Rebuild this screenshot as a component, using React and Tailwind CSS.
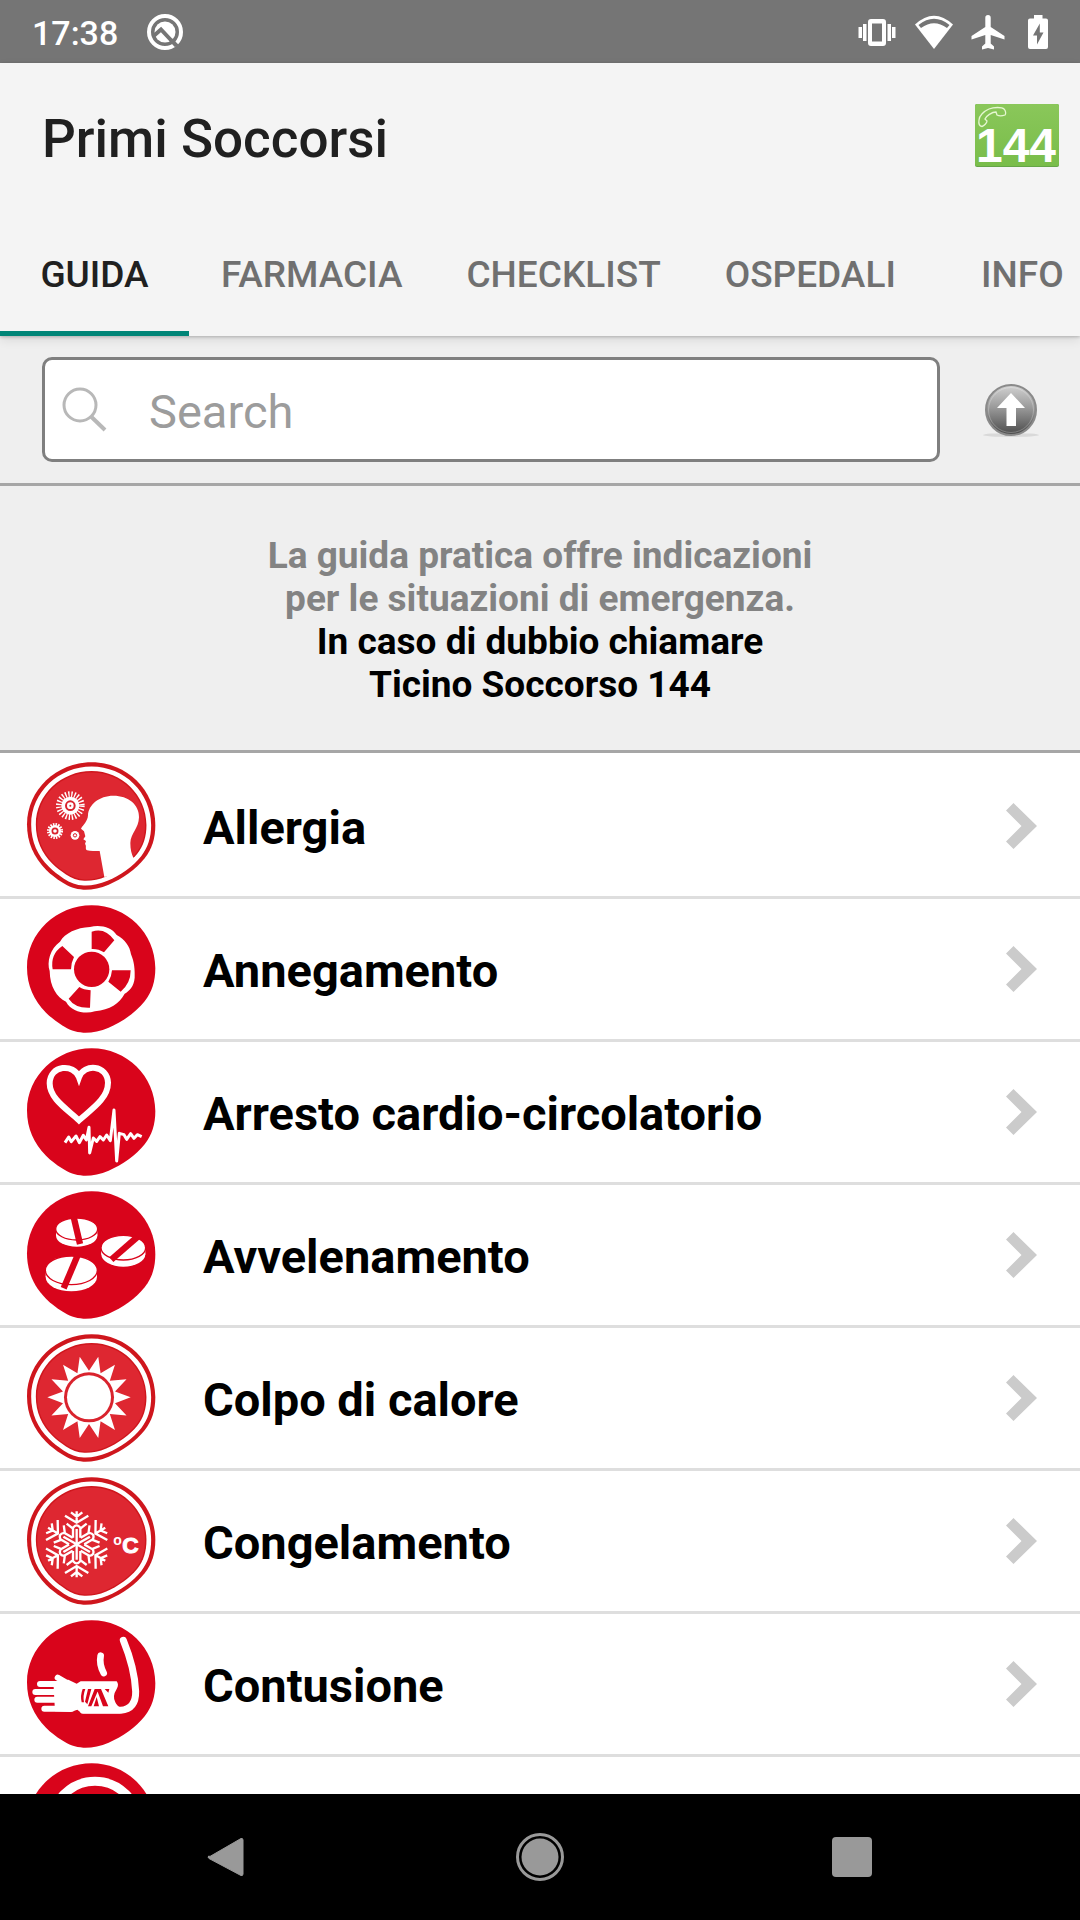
import React from "react";

const BLOB =
  "M197 4C302 4 388 88 388 192C388 232 378 264 356 292C330 325 288 354 248 371C222 382 196 387 172 386C148 385 128 377 108 364C90 352 74 340 60 326C24 290 3 245 3 190C3 86 92 4 197 4Z";

/* Red pebble-shaped badge; "ringed" adds the white inner outline. */
function Badge({ top, ringed, children }) {
  return (
    <svg viewBox={`78 ${top - 4} 390 390`} className="h-[130px] w-[130px] shrink-0" aria-hidden="true">
      <g transform={`translate(78 ${top - 4})`}>
        <path d={BLOB} fill={ringed ? "#cf161d" : "#d9041b"} />
        {ringed && (
          <>
            <path d={BLOB} fill="#fff" transform="translate(195 194) scale(.935) translate(-195 -194)" />
            <path d={BLOB} fill="#cf161d" transform="translate(195 194) scale(.862) translate(-195 -194)" />
            <path d={BLOB} fill="#de2731" transform="translate(195 194) scale(.84) translate(-195 -194)" />
          </>
        )}
      </g>
      {children}
    </svg>
  );
}

function AllergyIcon() {
  return (
    <Badge top={63} ringed>
      <path
        fill="#fff"
        d="M340 163C385 163 418 190 417 228C416 262 392 276 391 305C391 325 395 338 400 349L424 338L390 374L350 400L313 407L299 329C285 328 272 330 261 327C254 323 261 314 255 308L258 299L250 294L256 285L252 270L243 262C250 250 263 240 264 222C265 190 298 163 340 163Z"
      />
      <circle cx="211" cy="193" r="34" fill="none" stroke="#fff" strokeWidth="18" strokeDasharray="4 5" />
      <circle cx="211" cy="193" r="27" fill="#fff" />
      <circle cx="211" cy="193" r="13" fill="none" stroke="#d9232d" strokeWidth="6" />
      <circle cx="211" cy="193" r="3" fill="#d9232d" />
      <circle cx="165" cy="269" r="18" fill="none" stroke="#fff" strokeWidth="12" strokeDasharray="4 3" />
      <circle cx="165" cy="269" r="18" fill="#fff" />
      <circle cx="165" cy="269" r="8" fill="none" stroke="#d9232d" strokeWidth="5" />
      <circle cx="225" cy="282" r="13" fill="#fff" />
      <circle cx="225" cy="282" r="5" fill="none" stroke="#d9232d" strokeWidth="3" />
    </Badge>
  );
}

function DrowningIcon() {
  return (
    <Badge top={495}>
      <path
        fill="#fff"
        d="M270 560C300 552 335 560 350 584C375 598 390 618 393 642C403 665 405 690 404 712C402 738 388 752 374 760C358 790 330 808 285 813C255 822 215 815 198 784C170 770 150 740 149 692C140 665 150 625 180 604C195 578 230 562 270 560Z"
      />
      <path
        fill="#d9041b"
        d="M275 574Q315 560 343 600L312 636Q295 625 275 626ZM187 617L222 650Q214 665 213 687L158 687Q150 642 187 617ZM336 690L392 690Q392 730 362 754L325 724Q335 708 336 690ZM238 740L206 775Q225 804 270 802L272 750Q250 748 238 740Z"
      />
      <circle cx="275" cy="687" r="53" fill="#d9041b" />
    </Badge>
  );
}

function HeartIcon() {
  return (
    <Badge top={55}>
      <path
        fill="none"
        stroke="#fff"
        strokeWidth="18"
        d="M237 142C222 100 150 104 149 160C149 206 202 238 237 271C274 238 324 206 324 158C322 104 252 100 237 142Z"
      />
      <path
        fill="none"
        stroke="#fff"
        strokeWidth="9"
        strokeLinejoin="round"
        d="M195 338L206 321L214 335L228 318L238 338L250 316L259 330L267 292L269 369L280 324L290 334L300 320L310 330L320 315L331 332L342 240L350 393L358 310L372 314L380 328L392 311L402 325L412 314L425 320"
      />
    </Badge>
  );
}

function Pill({ cx, cy, rx, ry, slot }) {
  return (
    <>
      <ellipse cx={cx} cy={cy + 20} rx={rx} ry={ry} fill="#fff" />
      <rect x={cx - rx} y={cy} width={rx * 2} height="20" fill="#fff" />
      <ellipse cx={cx} cy={cy} rx={rx + 1} ry={ry} fill="#fff" stroke="#d9041b" strokeWidth="4" />
      <path d={slot} stroke="#d9041b" strokeWidth="19" />
    </>
  );
}

function PoisonIcon() {
  return (
    <Badge top={483}>
      <Pill cx={230} cy={596} rx={62} ry={33} slot="M221 560L240 641" />
      <Pill cx={370} cy={652} rx={66} ry={37} slot="M412 620L334 688" />
      <Pill cx={214} cy={720} rx={77} ry={43} slot="M233 675L191 774" />
    </Badge>
  );
}

const SUN_RAYS = Array.from({ length: 28 }, (_, i) => {
  const r = i % 2 ? 80 : 125;
  const a = (i * Math.PI) / 14;
  return `${(267 + r * Math.cos(a)).toFixed(1)},${(229 + r * Math.sin(a)).toFixed(1)}`;
}).join(" ");

function SunIcon() {
  return (
    <Badge top={40} ringed>
      <polygon points={SUN_RAYS} fill="#fff" />
      <circle cx="267" cy="229" r="75" fill="#d9232d" />
      <circle cx="267" cy="229" r="66" fill="#fff" />
    </Badge>
  );
}

function FrostIcon() {
  return (
    <Badge top={469} ringed>
      <g transform="translate(230 670)" fill="none" stroke="#fff" strokeWidth="7">
        {[0, 60, 120, 180, 240, 300].map((a) => (
          <path
            key={a}
            transform={`rotate(${a})`}
            d="M0 0V-46M0 -66V-99M-17 -96L0 -83L17 -96M-35 -86L0 -65L35 -86M-11 -20V-50Q0 -64 11 -50V-20M-12 -48L-30 -62M12 -48L30 -62"
          />
        ))}
      </g>
      <text x="340" y="673" fill="#fff" fontSize="42" fontWeight="700" fontFamily="Liberation Sans, sans-serif">o</text>
      <text x="367" y="696" fill="#fff" stroke="#fff" strokeWidth="3" fontSize="68" fontWeight="700" fontFamily="Liberation Sans, sans-serif">C</text>
    </Badge>
  );
}

function BruiseIcon() {
  return (
    <Badge top={62}>
      <g fill="none" stroke="#fff" strokeLinecap="round" strokeLinejoin="round">
        <path strokeWidth="21" d="M370 122Q404 205 407 275Q408 328 362 332L250 332" />
        <path strokeWidth="20" d="M302 168Q297 194 311 220" />
        <path strokeWidth="18" d="M120 253H190M106 277H190M112 300H190M133 327H215M173 234L232 268" />
      </g>
      <path fill="#fff" d="M160 245L205 240L230 252L242 245L350 245Q358 255 350 268Q336 290 346 308Q352 322 366 325L360 341L245 341L232 330L212 337L165 335Z" />
      <g fill="#d9041b">
        <path d="M248 268H256Q248 288 252 308H245Q240 288 248 268ZM264 268H274L262 314L255 306ZM284 268H296L274 320H264ZM290 292L297 320H281ZM290 268H303L325 320H309ZM314 268H328L325 279Z" />
      </g>
    </Badge>
  );
}

function RingIcon() {
  return (
    <Badge top={489}>
      <circle cx="285" cy="673" r="130" fill="none" stroke="#fff" strokeWidth="27" />
    </Badge>
  );
}

const TABS = ["GUIDA", "FARMACIA", "CHECKLIST", "OSPEDALI", "INFO"];

const TOPICS = [
  { label: "Allergia", Icon: AllergyIcon },
  { label: "Annegamento", Icon: DrowningIcon },
  { label: "Arresto cardio-circolatorio", Icon: HeartIcon },
  { label: "Avvelenamento", Icon: PoisonIcon },
  { label: "Colpo di calore", Icon: SunIcon },
  { label: "Congelamento", Icon: FrostIcon },
  { label: "Contusione", Icon: BruiseIcon },
  { label: "", Icon: RingIcon },
];

function StatusBar() {
  return (
    <div className="flex h-[63px] shrink-0 items-center bg-[#757575] px-8 text-white">
      <span className="pt-0.5 text-[34px] font-medium leading-none">17:38</span>
      <svg viewBox="0 0 38 38" className="ml-7 h-[38px] w-[38px]" aria-hidden="true">
        <circle cx="19" cy="19" r="16" fill="none" stroke="#fff" strokeWidth="4" />
        <circle cx="19" cy="19" r="10.500" fill="#fff" />
        <path d="M7 23.500L15 16.500L30.500 33" fill="none" stroke="#757575" strokeWidth="4" />
        <path d="M25.500 26.500L34 35.500" stroke="#757575" strokeWidth="3" />
      </svg>
      <div className="ml-auto flex items-center gap-[17px]">
        <svg viewBox="0 0 40 36" className="h-9 w-10" fill="#fff" aria-hidden="true">
          <path fillRule="evenodd" d="M14 5h12a3 3 0 0 1 3 3v21a3 3 0 0 1-3 3H14a3 3 0 0 1-3-3V8a3 3 0 0 1 3-3zm1 4.500v18h10v-18z" />
          <path d="M6 10h3.500v17H6zM1.500 13H5v11H1.500zM30.500 10H34v17h-3.500zM35 13h3.500v11H35z" />
        </svg>
        <svg viewBox="0 0 40 36" className="h-9 w-10" aria-hidden="true">
          <path d="M1 10.500Q20-7 39 10.500L20 35Z" fill="#fff" />
          <path d="M4.500 11Q20-1.500 35.500 11L33 14Q20 4.500 7 14Z" fill="#757575" />
        </svg>
        <svg viewBox="0 0 34 36" className="h-9 w-[34px]" aria-hidden="true">
          <path d="M17 1a2.700 2.700 0 0 1 2.700 2.700V13L33.500 22v3.500L19.700 21v8.500L23 32.500V35.500L17 34L11 35.500V32.500L14.300 29.500V21L.5 25.500V22L14.300 13V3.700A2.700 2.700 0 0 1 17 1Z" fill="#fff" />
        </svg>
        <svg viewBox="-6 0 26 36" className="h-9 w-[26px]" aria-hidden="true">
          <path d="M6 1h8.500v3.500H18a2 2 0 0 1 2 2V33a2 2 0 0 1-2 2H2a2 2 0 0 1-2-2V6.500a2 2 0 0 1 2-2h4z" fill="#fff" />
          <path d="M11.800 9.500L5 21.500H9V30.500L15.500 18.500H11.800Z" fill="#757575" />
        </svg>
      </div>
    </div>
  );
}

function Header() {
  return (
    <header className="relative z-10 shrink-0 bg-[#f4f4f4] shadow-[0_1px_3px_rgba(0,0,0,0.22),0_4px_10px_rgba(0,0,0,0.09)]">
      <div className="flex h-[147px] items-center justify-between pb-0.5 pl-[42px] pr-[21px]">
        <h1 className="pt-2 text-[53px] font-medium leading-none text-[#202020]">Primi Soccorsi</h1>
        <button type="button" aria-label="Chiama 144">
          <svg viewBox="0 0 84 63" className="h-[63px] w-[84px] overflow-visible" aria-hidden="true">
            <defs>
              <linearGradient id="call-green" x1="0" y1="0" x2="0" y2="1">
                <stop offset="0" stopColor="#8ac75a" />
                <stop offset="1" stopColor="#79bd4a" />
              </linearGradient>
            </defs>
            <rect width="84" height="63" rx="2" fill="#66a548" />
            <rect width="84" height="62" rx="2" fill="url(#call-green)" />
            <path
              d="M4 16C4 12 9 7 14 5C19 3 27 3 29 5C31 7 31 10 30 11C27 12 24 12 22 11L21 8C17 8 11 12 10 15L12 17C12 19 9 22 7 22.500C4 22 3.500 19 4 16Z"
              fill="none"
              stroke="#e6f7d2"
              strokeWidth="1.300"
            />
            <text x="41" y="58" textAnchor="middle" fill="#fff" fontSize="48" fontWeight="700" fontFamily="Liberation Sans, sans-serif">144</text>
          </svg>
        </button>
      </div>
      <nav className="flex h-[126px] overflow-hidden" role="tablist">
        {TABS.map((tab, i) => (
          <button
            key={tab}
            type="button"
            role="tab"
            aria-selected={i === 0}
            className={
              "flex min-w-[189px] shrink-0 items-center justify-center border-y-[5px] border-t-transparent px-8 pt-0.5 text-[37px] font-medium leading-none " +
              (i === 0 ? "border-b-[#008577] text-[#202020]" : "border-b-transparent text-[#707070]")
            }
          >
            {tab}
          </button>
        ))}
      </nav>
    </header>
  );
}

function SearchBar() {
  return (
    <div className="flex shrink-0 items-center border-b-[3px] border-[#a6a6a6] py-[21px] pl-[42px] pr-[41px]">
      <label className="flex h-[105px] flex-1 items-center rounded-[10px] border-[3px] border-[#7f7f7f] bg-white pl-[17px]">
        <svg viewBox="0 0 46 46" className="h-[46px] w-[46px] shrink-0" fill="none" stroke="#b8b8b8" aria-hidden="true">
          <circle cx="18" cy="18" r="16" strokeWidth="3" />
          <path d="M29.500 30L43 43" strokeWidth="4" />
        </svg>
        <input
          type="text"
          aria-label="Search"
          placeholder="Search"
          className="ml-[41px] h-full min-w-0 flex-1 bg-transparent pt-1 text-[47px] text-black outline-none placeholder:text-[#9c9c9c]"
        />
      </label>
      <button type="button" aria-label="Torna su" className="ml-[43px]">
        <svg viewBox="0 0 56 56" className="h-14 w-14" aria-hidden="true">
          <defs>
            <linearGradient id="up-grey" x1="0" y1="0" x2="0" y2="1">
              <stop offset="0" stopColor="#d2d2d2" />
              <stop offset=".45" stopColor="#9a9a9a" />
              <stop offset="1" stopColor="#4a4a4a" />
            </linearGradient>
          </defs>
          <ellipse cx="28" cy="53" rx="28" ry="2" fill="#d9d9d9" />
          <circle cx="28" cy="28" r="25" fill="url(#up-grey)" stroke="#8a8a8a" strokeWidth="2" />
          <circle cx="28" cy="28" r="22.500" fill="none" stroke="#fff" strokeOpacity=".25" />
          <path d="M28 11L42 26H33V44H23.500V26H14Z" fill="#fff" />
        </svg>
      </button>
    </div>
  );
}

export default function App() {
  return (
    <div className="flex h-screen flex-col overflow-hidden bg-white font-[Roboto,sans-serif]">
      <StatusBar />
      <Header />
      <main className="flex min-h-0 flex-1 flex-col overflow-hidden">
        <div className="shrink-0 bg-[#efefef]">
          <SearchBar />
          <p className="border-b-[3px] border-[#a6a6a6] pb-11 pt-12 text-center text-[37px] font-bold leading-[43px] text-black">
            <span className="text-[#838383]">
              La guida pratica offre indicazioni
              <br />
              per le situazioni di emergenza.
            </span>
            <br />
            In caso di dubbio chiamare
            <br />
            Ticino Soccorso 144
          </p>
        </div>
        <ul className="pt-[3px]">
          {TOPICS.map(({ label, Icon }, i) => (
            <li key={i} className="border-b-[3px] border-[#dedede]">
              <a href="#" className="flex h-[140px] items-center pl-[26px] pr-[43px]">
                <Icon />
                <span className="ml-[47px] flex-1 pt-0.5 text-[47px] font-bold leading-none text-black">{label}</span>
                <svg viewBox="0 0 31 46" className="h-[46px] w-[31px]" aria-hidden="true">
                  <path d="M7.500 0L31 23L7.500 46L0 38.500L15.500 23L0 7.500Z" fill="#cbcbcb" />
                </svg>
              </a>
            </li>
          ))}
        </ul>
      </main>
      <nav className="grid h-[126px] shrink-0 grid-cols-3 bg-black px-[72px]">
        <button type="button" aria-label="Indietro" className="flex items-center justify-center">
          <svg viewBox="0 0 48 48" className="h-12 w-12" aria-hidden="true">
            <path d="M5 24L37 5.500Q39 5 39 7V41Q39 43 37 42.500L5 25.500Q3 24 5 22.800Z" fill="#999" stroke="#999" strokeWidth="1" strokeLinejoin="round" />
          </svg>
        </button>
        <button type="button" aria-label="Home" className="flex items-center justify-center">
          <svg viewBox="0 0 48 48" className="h-12 w-12" aria-hidden="true">
            <circle cx="24" cy="24" r="22.500" fill="none" stroke="#999" strokeWidth="3" />
            <circle cx="24" cy="24" r="18.500" fill="#999" />
          </svg>
        </button>
        <button type="button" aria-label="Recenti" className="flex items-center justify-center">
          <span className="h-10 w-10 rounded bg-[#999]" />
        </button>
      </nav>
    </div>
  );
}
